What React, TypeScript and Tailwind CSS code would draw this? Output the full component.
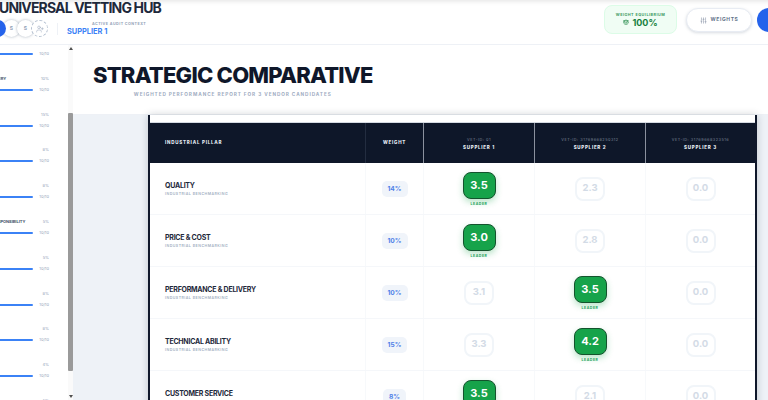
import { SlidersVertical, UserPlus, Scale } from "lucide-react";

type Row = { name: string; weight: string; scores: string[]; leader: number };

const ROWS: Row[] = [
  { name: "QUALITY", weight: "14%", scores: ["3.5", "2.3", "0.0"], leader: 0 },
  { name: "PRICE & COST", weight: "10%", scores: ["3.0", "2.8", "0.0"], leader: 0 },
  { name: "PERFORMANCE & DELIVERY", weight: "10%", scores: ["3.1", "3.5", "0.0"], leader: 1 },
  { name: "TECHNICAL ABILITY", weight: "15%", scores: ["3.3", "4.2", "0.0"], leader: 1 },
  { name: "CUSTOMER SERVICE", weight: "8%", scores: ["3.5", "2.1", "0.0"], leader: 0 },
];

const SIDE = [
  { label: "", pct: "10%" },
  { label: "PERFORMANCE & DELIVERY", pct: "10%" },
  { label: "", pct: "15%" },
  { label: "", pct: "8%" },
  { label: "", pct: "8%" },
  { label: "CORPORATE SOCIAL RESPONSIBILITY", pct: "5%" },
  { label: "", pct: "5%" },
  { label: "", pct: "8%" },
  { label: "", pct: "8%" },
  { label: "", pct: "4%" },
  { label: "", pct: "5%" },
];

function Score({ value, leader }: { value: string; leader: boolean }) {
  if (leader) {
    return (
      <div className="flex flex-col items-center pt-[1px]">
        <div className="flex h-[27px] w-[33px] items-center justify-center rounded-[8px] border border-[#14532d] bg-[#16a34a] text-[11px] font-bold text-white shadow-[0_3px_6px_rgba(22,163,74,0.3)]">
          {value}
        </div>
        <span className="mt-[3px] text-[3.5px] font-bold leading-[5px] tracking-[0.15em] text-[#22a35a]">LEADER</span>
      </div>
    );
  }
  return (
    <div className="flex h-[24px] w-[30px] items-center justify-center rounded-[8px] border-2 border-[#f1f5f9] bg-white text-[9.5px] font-bold text-[#d3dbe6]">
      {value}
    </div>
  );
}

export default function App() {
  return (
    <div className="flex h-[400px] w-[768px] flex-col overflow-hidden bg-white font-['Inter',sans-serif]">
      <header className="flex h-[45px] shrink-0 justify-between border-b border-[#eef1f6] bg-white shadow-[inset_0_6px_5px_-5px_rgba(0,0,0,0.12)]">
        <div>
          <h1 className="-ml-[1px] whitespace-nowrap text-[14px] font-bold leading-[16px] tracking-[-0.06em] text-[#1e293b]">UNIVERSAL VETTING HUB</h1>
          <div className="mt-[4px] flex items-center">
            <div className="-ml-[11px] flex">
              <div className="relative z-30 h-[17px] w-[17px] rounded-full bg-[#2563eb]" />
              <div className="relative z-10 -ml-[3px] flex h-[17px] w-[17px] items-center justify-center rounded-full bg-white text-[5px] font-bold text-[#94a3b8] shadow-[0_0_3px_rgba(100,116,139,0.55)]">S</div>
              <div className="relative z-20 -ml-[3px] flex h-[17px] w-[17px] items-center justify-center rounded-full bg-white text-[5px] font-bold text-[#94a3b8] shadow-[0_0_3px_rgba(100,116,139,0.55)]">S</div>
              <div className="relative z-20 -ml-[3px] flex h-[17px] w-[17px] items-center justify-center rounded-full border border-dashed border-[#b4c0d0] bg-white text-[#94a3b8]">
                <UserPlus size={8} strokeWidth={1.5} />
              </div>
            </div>
            <div className="ml-[9px] h-[12px] w-px bg-[#eef1f6]" />
            <div className="ml-[9px]">
              <div className="pl-[25px] text-[3.7px] font-bold leading-[5px] tracking-[0.12em] text-[#94a3b8]">ACTIVE AUDIT CONTEXT</div>
              <div className="mt-[1px] text-[7.4px] font-bold leading-[10px] text-[#3b82f6]">SUPPLIER 1</div>
            </div>
          </div>
        </div>
        <div className="flex items-start">
          <div className="mt-[5px] flex h-[29px] w-[73px] flex-col items-center justify-center rounded-[8px] border border-[#dcfce7] bg-[#f0fdf4]">
            <span className="text-[3.8px] font-bold leading-[5px] tracking-[0.12em] text-[#3f9a63]">WEIGHT EQUILIBRIUM</span>
            <span className="flex items-center gap-[3px] text-[9px] font-bold leading-[11px] text-[#15803d]">
              <Scale size={6} strokeWidth={2} />
              100%
            </span>
          </div>
          <button className="ml-[9px] mt-[8px] flex h-[24px] w-[66px] items-center justify-center gap-[4px] rounded-full border border-[#e8ecf3] bg-white text-[5px] font-bold tracking-[0.12em] text-[#64748b] shadow-[0_1px_3px_rgba(100,116,139,0.25)]">
            <SlidersVertical size={7} strokeWidth={1.5} />
            WEIGHTS
          </button>
          <div className="-mr-[13px] ml-[5px] mt-[8px] h-[24px] w-[24px] shrink-0 rounded-full bg-[#2563eb]" />
        </div>
      </header>

      <div className="flex min-h-0 flex-1">
        <aside className="flex w-[73px] shrink-0 border-r border-[#f3f5f8]">
          <div className="w-[68px] shrink-0 overflow-hidden">
            <div className="-ml-[100px] -mt-[5px] w-[149px]">
              {SIDE.map((s, i) => (
                <div key={i} className="h-[35.8px]">
                  <div className="flex h-[6px] items-center justify-between pl-[52px]">
                    <span className="whitespace-nowrap text-[4px] font-bold tracking-[-0.01em] text-[#475569]">{s.label}</span>
                    <span className="text-[4px] text-[#94a3b8]">{s.pct}</span>
                  </div>
                  <div className="mt-[5px] flex h-[6px] items-center justify-between">
                    <div className="h-[2px] w-[133px] rounded-full bg-[#3b82f6]" />
                    <span className="text-[4px] text-[#94a3b8]">10/10</span>
                  </div>
                </div>
              ))}
            </div>
          </div>
          <div className="flex w-[5px] flex-col items-center bg-[#fafafa]">
            <div className="mt-[2px] h-0 w-0 border-x-[2px] border-b-[3px] border-x-transparent border-b-[#505050]" />
            <div className="mt-[63px] h-[258px] w-[5px] rounded-[1px] bg-[#9a9a9a]" />
            <div className="mb-[2px] mt-auto h-0 w-0 border-x-[2px] border-t-[3px] border-x-transparent border-t-[#505050]" />
          </div>
        </aside>

        <main className="flex min-w-0 flex-1 flex-col overflow-hidden bg-[#eef2f7]">
          <div className="h-[70px] shrink-0 border-b border-[#eef1f6] bg-white pl-[20px] pt-[16px]">
            <div className="flex w-fit flex-col items-center">
              <h2 className="whitespace-nowrap text-[22px] font-extrabold leading-[28px] tracking-[-0.035em] text-[#0f172a]">STRATEGIC COMPARATIVE</h2>
              <p className="mt-[2px] whitespace-nowrap text-[4.7px] font-bold leading-[7px] tracking-[0.2em] text-[#9fadc2]">WEIGHTED PERFORMANCE REPORT FOR 3 VENDOR CANDIDATES</p>
            </div>
          </div>
          <div className="ml-[75px] w-[609px] shrink-0 border-x-2 border-[#0f172a] bg-white pt-[7px] shadow-[0_0_8px_rgba(15,23,42,0.2)]">
            <div className="grid h-[41px] grid-cols-[215px_58px_111px_111px_110px] border-t border-[#d5dae2] bg-[#0e1729]">
              <div className="flex items-center pl-[15px] pt-[1px] text-[4.5px] font-extrabold tracking-[0.17em] text-[#e2e8f0]">INDUSTRIAL PILLAR</div>
              <div className="flex items-center justify-center border-l border-[#232d40] pt-[1px] text-[4.5px] font-extrabold tracking-[0.17em] text-[#e2e8f0]">WEIGHT</div>
              {["01", "31769668250312", "31769668323516"].map((id, i) => (
                <div key={id} className="flex flex-col items-center justify-center border-l border-[#8a919e] pt-[2px]">
                  <span className="text-[3.8px] leading-[6px] tracking-[0.14em] text-[#7b8596]">VET-ID: {id}</span>
                  <span className="mt-[1px] text-[4.5px] font-extrabold leading-[7px] tracking-[0.16em] text-[#e8edf4]">SUPPLIER {i + 1}</span>
                </div>
              ))}
            </div>
            {ROWS.map((r) => (
              <div key={r.name} className="grid h-[52px] grid-cols-[215px_58px_111px_111px_110px] border-b border-[#f5f7fa]">
                <div className="flex flex-col justify-center pl-[15px] pt-[1px]">
                  <span className="text-[7px] font-bold leading-[9px] tracking-[-0.035em] text-[#1e293b]">{r.name}</span>
                  <span className="mt-[2px] text-[3.6px] font-semibold leading-[5px] tracking-[0.13em] text-[#a3b0c2]">INDUSTRIAL BENCHMARKING</span>
                </div>
                <div className="flex items-center justify-center border-l border-[#f7f9fb]">
                  <span className="rounded-[5px] bg-[#f0f4fa] px-[6px] py-[4px] text-[6.6px] font-bold leading-[8px] text-[#4f80e8]">{r.weight}</span>
                </div>
                {r.scores.map((v, i) => (
                  <div key={i} className="flex items-center justify-center border-l border-[#f7f9fb]">
                    <Score value={v} leader={i === r.leader} />
                  </div>
                ))}
              </div>
            ))}
          </div>
        </main>
      </div>
    </div>
  );
}
